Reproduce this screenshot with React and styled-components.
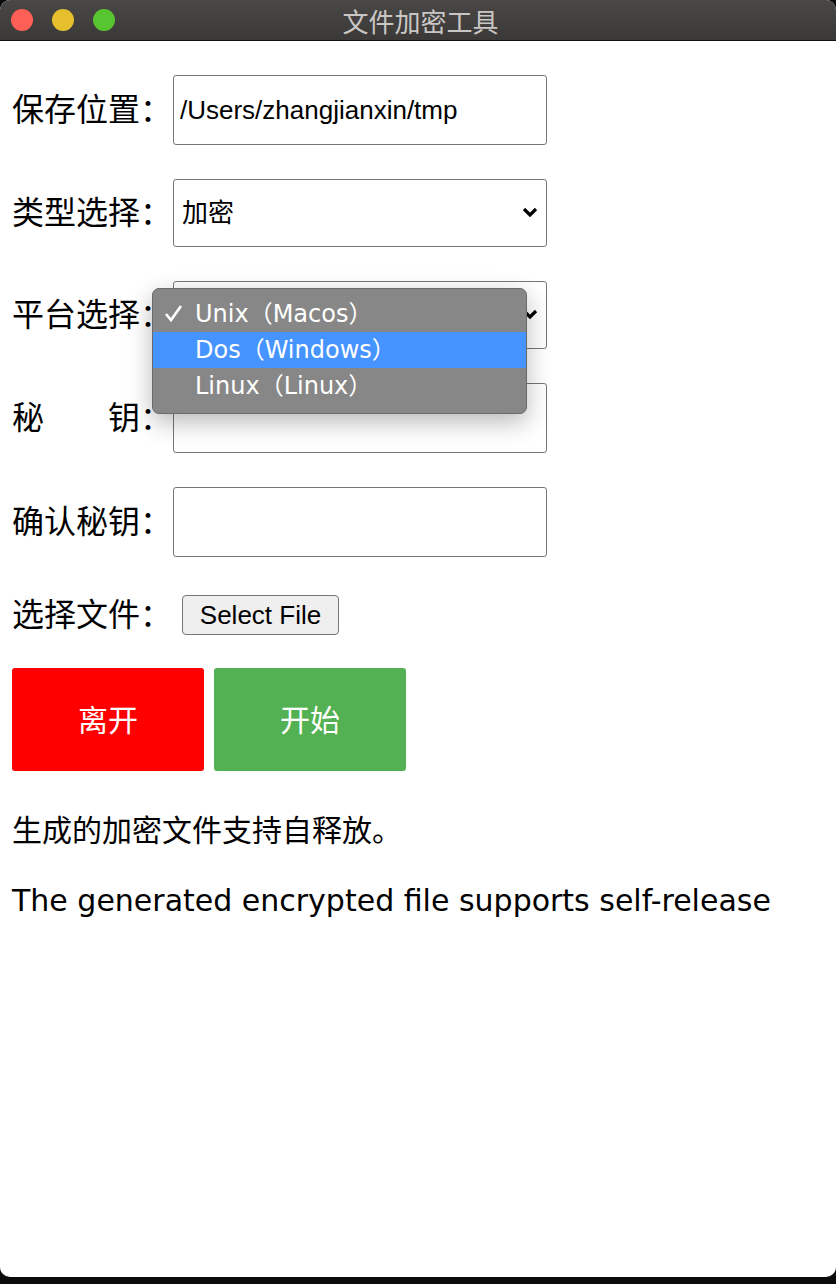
import React from 'react';
import styled, { createGlobalStyle } from 'styled-components';

const GlobalStyle = createGlobalStyle`
  html, body {
    margin: 0;
    padding: 0;
    background: #0b0b0c;
  }
  body {
    font-family: "Liberation Sans", "Noto Sans CJK SC", sans-serif;
  }
`;

const Window = styled.div`
  position: relative;
  width: 836px;
  height: 1277px;
  background: #ffffff;
  border-radius: 10px;
  overflow: hidden;
  display: flex;
  flex-direction: column;
`;

const TitleBar = styled.div`
  height: 41px;
  flex-shrink: 0;
  background: linear-gradient(#4a4846, #3b3937);
  border-bottom: 1px solid #111;
  box-sizing: border-box;
  display: flex;
  align-items: center;
`;

const Lights = styled.div`
  display: flex;
  gap: 19px;
  padding-left: 11px;
  width: 110px;
  flex-shrink: 0;
`;

const Light = styled.span`
  width: 22px;
  height: 22px;
  border-radius: 50%;
  background: ${p => p.color};
`;

const Title = styled.div`
  flex: 1;
  text-align: center;
  margin-right: 116px;
  color: #c9c7c5;
  font-size: 26px;
  font-family: "Noto Sans CJK SC", sans-serif;
`;

const Content = styled.div`
  padding: 34px 12px 0 12px;
  display: flex;
  flex-direction: column;
`;

const Form = styled.div`
  display: flex;
  flex-direction: column;
  gap: 34px;
`;

const Row = styled.div`
  display: flex;
  align-items: center;
  height: ${p => p.h || 70}px;
  margin-top: ${p => p.mt || 0}px;
`;

const Label = styled.div`
  width: 161px;
  flex-shrink: 0;
  padding-bottom: 7px;
  font-size: 32px;
  font-family: "Noto Sans CJK SC", sans-serif;
  color: #000;
  display: flex;
  align-items: center;
  white-space: nowrap;
`;

const Gap = styled.span`
  display: inline-block;
  width: 64px;
`;

const TextInput = styled.input`
  width: 374px;
  height: 70px;
  box-sizing: border-box;
  border: 1px solid #767676;
  border-radius: 3px;
  padding: 0 6px;
  font-size: 26px;
  font-family: "Liberation Sans", "Noto Sans CJK SC", sans-serif;
  color: #000;
  outline: none;
`;

const SelectWrap = styled.div`
  position: relative;
  width: 374px;
  height: 68px;
`;

const Select = styled.select`
  appearance: none;
  width: 100%;
  height: 100%;
  box-sizing: border-box;
  border: 1px solid #767676;
  border-radius: 3px;
  background: #fff;
  padding: 0 8px;
  font-size: 26px;
  font-family: "Liberation Sans", "Noto Sans CJK SC", sans-serif;
  color: #000;
  outline: none;
`;

const Chevron = styled.svg`
  position: absolute;
  right: 9px;
  top: 28px;
  pointer-events: none;
`;

const FileButton = styled.button`
  margin-left: 9px;
  height: 40px;
  width: 157px;
  box-sizing: border-box;
  background: #efefef;
  border: 1px solid #767676;
  border-radius: 4px;
  font-size: 26px;
  font-family: "Liberation Sans", sans-serif;
  color: #000;
  padding: 0;
`;

const Actions = styled.div`
  display: flex;
  gap: 10px;
  margin-top: 33px;
`;

const ActionButton = styled.button`
  width: 192px;
  height: 103px;
  border: none;
  border-radius: 3px;
  background: ${p => p.bg};
  color: #fff;
  font-size: 30px;
  padding-bottom: 4px;
  font-family: "Noto Sans CJK SC", sans-serif;
`;

const Note = styled.p`
  margin: ${p => p.mt}px 0 0 0;
  font-size: 30px;
  line-height: 40px;
  color: #000;
  white-space: nowrap;
  font-family: ${p => p.cjk ? '"Noto Sans CJK SC", sans-serif' : '"DejaVu Sans", sans-serif'};
`;

const Menu = styled.div`
  position: absolute;
  left: 152px;
  top: 288px;
  width: 375px;
  box-sizing: border-box;
  padding: 7px 0 9px;
  background: #878787;
  border: 1px solid #6a6a6a;
  border-radius: 7px;
  box-shadow: 0 8px 24px rgba(0, 0, 0, 0.28);
  font-family: "DejaVu Sans", "Noto Sans CJK SC", sans-serif;
`;

const MenuItem = styled.div`
  position: relative;
  height: 36px;
  display: flex;
  align-items: center;
  padding-left: 42px;
  color: #fff;
  font-size: 24px;
  line-height: 36px;
  background: ${p => p.active ? '#4694ff' : 'transparent'};
`;

const Check = styled.svg`
  position: absolute;
  left: 11px;
  top: 8px;
`;

const ChevronIcon = () => (
  <Chevron width="16" height="11" viewBox="0 0 16 11">
    <polyline points="2,2 8,8 14,2" fill="none" stroke="#000" strokeWidth="3.2" />
  </Chevron>
);

export default function App() {
  return (
    <>
      <GlobalStyle />
      <Window>
        <TitleBar>
          <Lights>
            <Light color="#fe5f57" />
            <Light color="#e5bf2d" />
            <Light color="#56c52f" />
          </Lights>
          <Title>文件加密工具</Title>
        </TitleBar>
        <Content>
          <Form>
            <Row>
              <Label>保存位置：</Label>
              <TextInput defaultValue="/Users/zhangjianxin/tmp" />
            </Row>
            <Row h={68}>
              <Label>类型选择：</Label>
              <SelectWrap>
                <Select defaultValue="enc">
                  <option value="enc">加密</option>
                  <option value="dec">解密</option>
                </Select>
                <ChevronIcon />
              </SelectWrap>
            </Row>
            <Row h={68}>
              <Label>平台选择：</Label>
              <SelectWrap>
                <Select defaultValue="unix">
                  <option value="unix">Unix（Macos）</option>
                  <option value="dos">Dos（Windows）</option>
                  <option value="linux">Linux（Linux）</option>
                </Select>
                <ChevronIcon />
              </SelectWrap>
            </Row>
            <Row>
              <Label>秘<Gap />钥：</Label>
              <TextInput type="password" />
            </Row>
            <Row>
              <Label>确认秘钥：</Label>
              <TextInput type="password" />
            </Row>
          </Form>
          <Row h={40} mt={38}>
            <Label>选择文件：</Label>
            <FileButton>Select File</FileButton>
          </Row>
          <Actions>
            <ActionButton bg="#ff0000">离开</ActionButton>
            <ActionButton bg="#53b153">开始</ActionButton>
          </Actions>
          <Note cjk mt={37}>生成的加密文件支持自释放。</Note>
          <Note mt={33}>The generated encrypted file supports self-release</Note>
        </Content>
        <Menu>
          <MenuItem>
            <Check width="20" height="19" viewBox="0 0 20 19">
              <polyline points="2,10 7,16 17,2" fill="none" stroke="#fff" strokeWidth="2.6" />
            </Check>
            Unix（Macos）
          </MenuItem>
          <MenuItem active>Dos（Windows）</MenuItem>
          <MenuItem>Linux（Linux）</MenuItem>
        </Menu>
      </Window>
    </>
  );
}
